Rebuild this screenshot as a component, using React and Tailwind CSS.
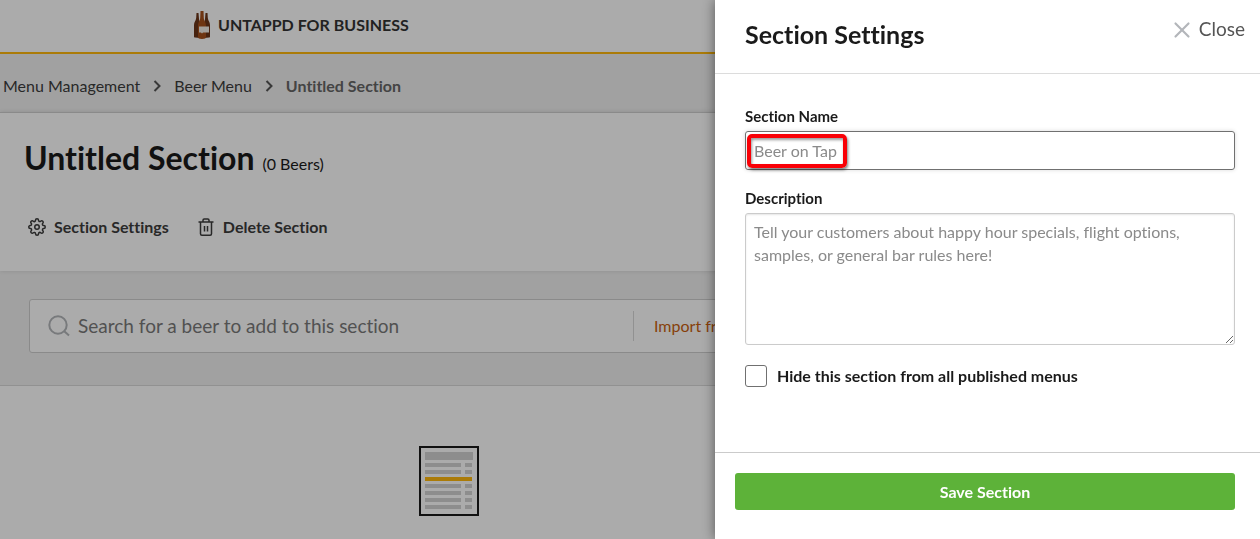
import { useState } from 'react';
import { X } from 'lucide-react';
import { FiSettings } from 'react-icons/fi';

const MENU_LINES = [23, 30, 44, 51, 58, 65];

function BottlesLogo() {
  return (
    <svg width="16" height="28" viewBox="0 0 16 28" aria-hidden="true">
      <path d="M2.500 2h2l.5 6c.3 3 1 3 1 6v13l-5-.5c-.7 0-1-.4-1-1V14c0-3 1.800-4 2.200-7z" fill="#6b3518" />
      <path d="M13.500 2h-2l-.5 6c-.3 3-1 3-1 6v13l5-.5c.7 0 1-.4 1-1V14c0-3-1.800-4-2.200-7z" fill="#6b3518" />
      <path d="M6.500 0h3l.3 7c.2 3 2.200 4 2.200 8v11c0 1.300-1 2-4 2s-4-.7-4-2V15c0-4 2-5 2.200-8z" fill="#a5501c" />
      <path d="M5 15.500h10v6H9l-1 1-1-1H5z" fill="#f2ede8" />
    </svg>
  );
}

function Chevron() {
  return (
    <svg width="10" height="12" viewBox="0 0 10 12" fill="none" stroke="#555" strokeWidth="2" aria-hidden="true">
      <path d="M2.500 1l5 5-5 5" />
    </svg>
  );
}

function SearchIcon() {
  return (
    <svg width="22" height="22" viewBox="0 0 22 22" fill="none" stroke="#b3b6ba" strokeWidth="2" aria-hidden="true">
      <circle cx="10" cy="10" r="8.700" />
      <path d="M16 16l5 4.500" />
    </svg>
  );
}

function TrashIcon() {
  return (
    <svg width="18" height="18" viewBox="0 0 18 18" fill="none" stroke="currentColor" strokeWidth="1.500" aria-hidden="true">
      <path d="M1.500 4h15M6 4V2.300c0-.8.400-1.300 1.200-1.300h3.600c.8 0 1.200.5 1.200 1.300V4" />
      <path d="M3.500 4v11.700c0 .9.500 1.500 1.400 1.500h8.200c.9 0 1.400-.6 1.400-1.500V4M7.500 8v5.500M10.500 8v5.500" />
    </svg>
  );
}

function MenuIllustration() {
  return (
    <svg width="60" height="70" viewBox="0 0 60 70" aria-hidden="true">
      <rect x="1" y="1" width="58" height="68" fill="#fff" stroke="#1a1a1a" strokeWidth="2" />
      <rect x="6" y="6" width="48" height="8" fill="#d2d2d2" />
      {MENU_LINES.map((bottom) => (
        <g key={bottom} fill="#d2d2d2">
          <rect x="6" y={bottom - 6} width="36" height="4" />
          <rect x="46" y={bottom - 6} width="7" height="4" />
        </g>
      ))}
      <rect x="6" y="31" width="47" height="4" fill="#ffb80c" />
    </svg>
  );
}

function MenuPage() {
  return (
    <div className="min-h-screen bg-white">
      <header className="flex h-[54px] items-center border-b-2 border-[#ffb80c] pb-[3px] pl-[194px]">
        <a href="#home" className="flex items-center gap-2 font-bold text-[#333]">
          <BottlesLogo />
          <span>UNTAPPD FOR BUSINESS</span>
        </a>
      </header>

      <div className="bg-[#f1f1f1]">
        <nav aria-label="Breadcrumb" className="flex h-[58px] items-center gap-3 pt-1.5 pl-[3px] text-[#3c3c3c]">
          <a href="#menus">Menu Management</a>
          <Chevron />
          <a href="#beer-menu">Beer Menu</a>
          <Chevron />
          <span className="font-bold text-[#666]">Untitled Section</span>
        </nav>

        <section className="border-t border-[#cecece] bg-white px-6 pt-[23px] pb-8 shadow-[0_0_5px_rgba(0,0,0,0.12)]">
          <div className="flex items-baseline gap-2 text-[#1a1a1a]">
            <h1 className="text-[32px] leading-[44px] font-bold">Untitled Section</h1>
            <span>(0 Beers)</span>
          </div>
          <div className="mt-[35px] flex gap-7 pl-1 text-[#3c3c3c]">
            <button type="button" className="flex items-center gap-2 font-bold">
              <FiSettings size={18} strokeWidth={2} />
              Section Settings
            </button>
            <button type="button" className="flex items-center gap-2 font-bold">
              <TrashIcon />
              Delete Section
            </button>
          </div>
        </section>

        <section className="border-b border-[#d8d8d8] pt-7 pr-12 pb-8 pl-[29px]">
          <div className="flex h-[54px] items-center rounded-[3px] border border-[#cecece] bg-white">
            <label className="flex w-[603px] items-center gap-2 pl-[18px]">
              <SearchIcon />
              <input
                type="search"
                aria-label="Search for a beer"
                placeholder="Search for a beer to add to this section"
                className="flex-1 text-[19px] outline-none placeholder:text-[#7a7a7a]"
              />
            </label>
            <a href="#import" className="border-l border-[#d8d8d8] py-[3px] pl-5 text-[#c95f10]">
              Import from Library
            </a>
          </div>
        </section>
      </div>

      <main className="flex pt-[60px] pl-[419px]">
        <MenuIllustration />
      </main>
    </div>
  );
}

function SectionDrawer() {
  const [name, setName] = useState('');
  const [description, setDescription] = useState('');
  const [hidden, setHidden] = useState(false);

  return (
    <aside className="fixed inset-y-0 right-0 flex w-[545px] flex-col bg-white text-[#1a1a1a] shadow-[0_0_12px_rgba(0,0,0,0.5)]">
      <header className="flex h-[74px] items-center justify-between border-b border-[#dcdcdc] pr-[15px] pb-1.5 pl-[30px]">
        <h2 className="text-[25px] leading-8 font-bold">Section Settings</h2>
        <button type="button" className="flex items-center gap-1 pb-2 text-[19px] text-[#555]">
          <X size={26} strokeWidth={2} className="text-[#b3b6ba]" />
          Close
        </button>
      </header>

      <form id="section-form" className="flex-1 pt-8 pr-[25px] pl-[30px]">
        <label htmlFor="name" className="block text-[15px] leading-5 font-bold">Section Name</label>
        <div className="relative mt-[5px]">
          <input
            id="name"
            value={name}
            onChange={(e) => setName(e.target.value)}
            placeholder="Beer on Tap"
            className="block h-[39px] w-full rounded-[3px] border border-[#707070] px-2 shadow-[0_0_4px_rgba(0,0,0,0.15)] outline-none placeholder:text-[#8a8a8a]"
          />
          <div className="pointer-events-none absolute top-[3px] left-[2px] h-[34px] w-[100px] rounded-[5px] border-4 border-[#f90006] shadow-[1px_2px_3px_rgba(0,0,0,0.5),inset_1px_2px_3px_rgba(0,0,0,0.4)]" />
        </div>

        <label htmlFor="description" className="mt-[18px] block text-[15px] leading-5 font-bold">Description</label>
        <textarea
          id="description"
          value={description}
          onChange={(e) => setDescription(e.target.value)}
          placeholder="Tell your customers about happy hour specials, flight options, samples, or general bar rules here!"
          className="mt-[5px] block h-[132px] w-full rounded-[3px] border border-[#cbcbcb] px-2 py-1.5 leading-[23px] shadow-[inset_0_1px_2px_rgba(0,0,0,0.1)] outline-none placeholder:text-[#8a8a8a]"
        />

        <label className="mt-[19px] flex items-center gap-[10px] font-bold">
          <input
            type="checkbox"
            checked={hidden}
            onChange={(e) => setHidden(e.target.checked)}
            className="size-[22px] appearance-none rounded-[3px] border border-[#707070] bg-white checked:bg-[#5db239]"
          />
          Hide this section from all published menus
        </label>
      </form>

      <footer className="border-t border-[#cbcbcb] pt-5 pr-[25px] pb-[29px] pl-5">
        <button
          type="submit"
          form="section-form"
          className="h-[37px] w-full rounded-[3px] bg-[#5db239] font-bold text-white"
        >
          Save Section
        </button>
      </footer>
    </aside>
  );
}

export default function App() {
  return (
    <div className="font-['Lato','Liberation_Sans',sans-serif] text-base [font-variant-ligatures:none]">
      <MenuPage />
      <div className="fixed inset-0 bg-black/33" />
      <SectionDrawer />
    </div>
  );
}
